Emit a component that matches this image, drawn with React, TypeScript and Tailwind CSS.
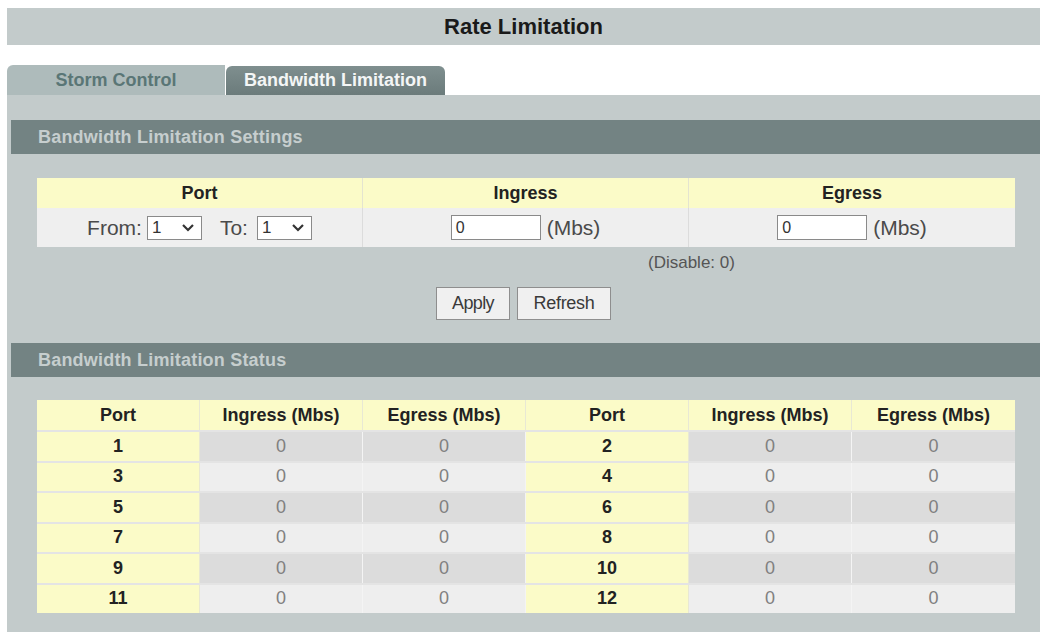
import React from "react";

const font = { fontFamily: '"Liberation Sans", Arial, sans-serif' };

function Chevron() {
  return (
    <svg width="14" height="9" viewBox="0 0 14 9" className="ml-auto mr-[6px]">
      <path d="M2 2 L7 7 L12 2" fill="none" stroke="#333" strokeWidth="2.2" />
    </svg>
  );
}

function Select() {
  return (
    <div className="flex items-center w-[55px] h-[24px] bg-white border border-[#8a8a8a] pl-[4px] text-[17px] text-[#333]">
      <span>1</span>
      <Chevron />
    </div>
  );
}

function Input() {
  return (
    <div className="flex items-center w-[90px] h-[25px] bg-white border border-[#8a8a8a] pl-[4px] text-[16px] text-[#333]">
      0
    </div>
  );
}

function SectionHeader({ children }: { children: React.ReactNode }) {
  return (
    <div className="h-[34px] bg-[#738383] flex items-center pl-[27px] text-[18px] tracking-[0.2px] font-bold text-[#c6cece]">
      {children}
    </div>
  );
}

export default function App() {
  const rows = [
    [1, 2],
    [3, 4],
    [5, 6],
    [7, 8],
    [9, 10],
    [11, 12],
  ];
  return (
    <div style={font} className="w-[1046px] h-[632px] bg-white pt-[8px] pl-[7px] pr-[6px] overflow-hidden">
      <div className="h-[37px] bg-[#c3cbcb] flex items-center justify-center text-[22px] font-bold text-[#1a1a1a]">
        Rate Limitation
      </div>
      <div className="mt-[20px] h-[30px] flex items-end gap-[1px]">
        <div className="w-[218px] h-[30px] bg-[#aebbbb] rounded-tl-[6px] flex items-center justify-center text-[18px] font-bold text-[#5a7676]">
          Storm Control
        </div>
        <div className="w-[219px] h-[29px] bg-gradient-to-b from-[#7f8f8f] to-[#6b7b7b] rounded-t-[6px] flex items-center justify-center text-[18px] font-bold text-[#f4f6f6]">
          Bandwidth Limitation
        </div>
      </div>
      <div className="bg-[#c3cbcb] h-[600px] pt-[25px] pl-[4px]">
        <SectionHeader>Bandwidth Limitation Settings</SectionHeader>
        <div className="ml-[26px] w-[978px] mt-[24px]">
          <div className="grid grid-cols-3 h-[30px] bg-[#fbfbc8] text-[18px] font-bold text-[#222]">
            <div className="flex items-center justify-center border-r border-[#e4e4d0]">Port</div>
            <div className="flex items-center justify-center border-r border-[#e4e4d0]">Ingress</div>
            <div className="flex items-center justify-center">Egress</div>
          </div>
          <div className="grid grid-cols-3 h-[39px] bg-[#efefef] text-[21px] text-[#4a4a4a]">
            <div className="flex items-center justify-center gap-[5px] border-r border-[#dcdcdc]">
              <span>From:</span>
              <Select />
              <span className="ml-[13px] mr-[4px]">To:</span>
              <Select />
            </div>
            <div className="flex items-center justify-center gap-[6px] border-r border-[#dcdcdc]">
              <Input />
              <span>(Mbs)</span>
            </div>
            <div className="flex items-center justify-center gap-[6px]">
              <Input />
              <span>(Mbs)</span>
            </div>
          </div>
        </div>
        <div className="h-[18px] mt-[7px] pl-[637px] text-[17px] text-[#555] leading-[18px]">(Disable: 0)</div>
        <div className="mt-[15px] flex justify-center gap-[7px] pr-[4px]">
          <div className="w-[74px] h-[33px] bg-[#f0f0f0] border border-[#8e8e8e] flex items-center justify-center text-[18px] text-[#3a3a3a] tracking-[-0.6px]">
            Apply
          </div>
          <div className="w-[94px] h-[33px] bg-[#f0f0f0] border border-[#8e8e8e] flex items-center justify-center text-[18px] text-[#3a3a3a] tracking-[-0.3px]">
            Refresh
          </div>
        </div>
        <div className="mt-[23px]">
          <SectionHeader>Bandwidth Limitation Status</SectionHeader>
        </div>
        <div className="ml-[26px] w-[978px] mt-[23px]">
          <div className="grid grid-cols-6 h-[30px] bg-[#fbfbc8] text-[18px] font-bold text-[#222]">
            {["Port", "Ingress (Mbs)", "Egress (Mbs)", "Port", "Ingress (Mbs)", "Egress (Mbs)"].map((h, i) => (
              <div key={i} className="flex items-center justify-center border-r border-[#e8e8d4] last:border-r-0">
                {h}
              </div>
            ))}
          </div>
          {rows.map((r, idx) => {
            const val = idx % 2 === 0 ? "bg-[#dcdcdc]" : "bg-[#eeeeee]";
            return (
              <div key={idx} className="grid grid-cols-6 h-[30.5px] border-t-[2px] border-[#e4e4e4] text-[18px]">
                {r.map((p, j) => (
                  <React.Fragment key={j}>
                    <div className="flex items-center justify-center bg-[#fbfbc8] font-bold text-[#222] border-r border-[#e8e8d4]">
                      {p}
                    </div>
                    <div className={`flex items-center justify-center ${val} text-[#808080] border-r border-[#f4f4f4]`}>0</div>
                    <div className={`flex items-center justify-center ${val} text-[#808080] ${j === 0 ? "border-r border-[#f4f4f4]" : ""}`}>0</div>
                  </React.Fragment>
                ))}
              </div>
            );
          })}
        </div>
      </div>
    </div>
  );
}
